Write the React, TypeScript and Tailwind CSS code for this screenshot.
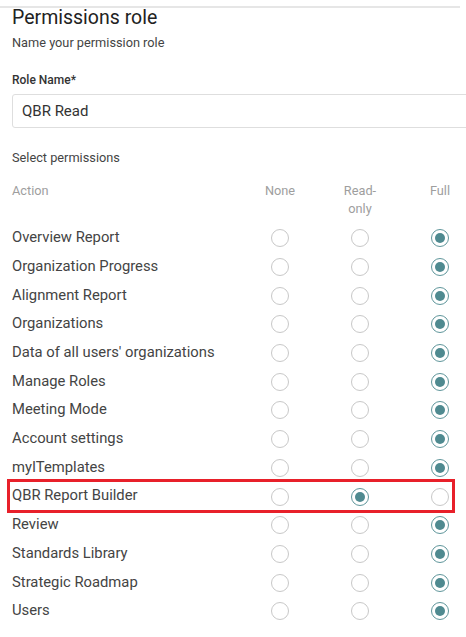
import React from "react";

const rows: { name: string; value: 0 | 1 | 2; highlight?: boolean }[] = [
  { name: "Overview Report", value: 2 },
  { name: "Organization Progress", value: 2 },
  { name: "Alignment Report", value: 2 },
  { name: "Organizations", value: 2 },
  { name: "Data of all users' organizations", value: 2 },
  { name: "Manage Roles", value: 2 },
  { name: "Meeting Mode", value: 2 },
  { name: "Account settings", value: 2 },
  { name: "myITemplates", value: 2 },
  { name: "QBR Report Builder", value: 1, highlight: true },
  { name: "Review", value: 2 },
  { name: "Standards Library", value: 2 },
  { name: "Strategic Roadmap", value: 2 },
  { name: "Users", value: 2 },
];

function Radio({ checked }: { checked: boolean }) {
  return checked ? (
    <span className="flex h-[18px] w-[18px] items-center justify-center rounded-full border-[1.5px] border-[#5f969b] bg-white">
      <span className="h-[10px] w-[10px] rounded-full bg-[#4f8a90]" />
    </span>
  ) : (
    <span className="h-[18px] w-[18px] rounded-full border-[1.5px] border-[#c8c8c8] bg-white" />
  );
}

export default function App() {
  return (
    <div
      className="relative h-[637px] w-[466px] overflow-hidden bg-white text-[#444]"
      style={{ fontFamily: "Roboto, 'Liberation Sans', sans-serif" }}
    >
      <div className="pt-[6px]">
        <div className="mr-[6px] h-[2px] bg-[#e6e6e6]" />
      </div>
      <div className="pl-[12px]">
        <h1 className="mt-[-2px] text-[19.5px] leading-[24px] font-normal text-[#222]">
          Permissions role
        </h1>
        <div className="mt-[5px] text-[12.75px] leading-[16px] text-[#444]">
          Name your permission role
        </div>
        <div className="mt-[21px] text-[12px] leading-[16px] font-medium text-[#333]">
          Role Name*
        </div>
        <div className="mt-[6px] mr-[-40px] flex h-[34px] items-center rounded-[3px] border border-[#dedede] pl-[9px] text-[15px] text-[#333]">
          QBR Read
        </div>
        <div className="mt-[22px] text-[12.75px] leading-[16px] text-[#444]">
          Select permissions
        </div>
        <div className="mt-[16px] grid w-[468px] grid-cols-[228px_80px_80px_80px] text-[12.75px] leading-[18px] text-[#9e9e9e]">
          <div>Action</div>
          <div className="text-center">None</div>
          <div className="text-center">
            Read-
            <br />
            only
          </div>
          <div className="text-center">Full</div>
        </div>
        <div className="mt-[5px] w-[468px]">
          {rows.map((r) => (
            <div
              key={r.name}
              className="relative grid h-[28.7px] grid-cols-[228px_80px_80px_80px] items-center text-[14.8px] text-[#444]"
            >
              <div className="whitespace-nowrap">{r.name}</div>
              {[0, 1, 2].map((i) => (
                <div key={i} className="flex justify-center pt-[2px]">
                  <Radio checked={r.value === i} />
                </div>
              ))}
              {r.highlight && (
                <div className="pointer-events-none absolute top-[-2px] left-[-5px] h-[34px] w-[448px] border-[3px] border-[#e8202a]" />
              )}
            </div>
          ))}
        </div>
      </div>
    </div>
  );
}
